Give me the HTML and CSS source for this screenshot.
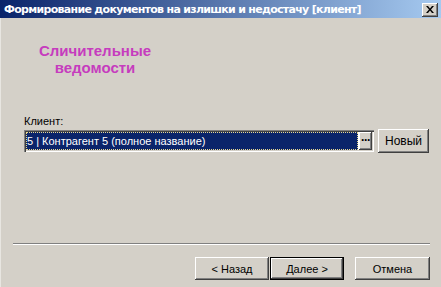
FILE: index.html
```html
<!DOCTYPE html>
<html lang="ru">
<head>
  <meta charset="UTF-8">
  <title>Формирование документов на излишки и недостачу [клиент]</title>
  <link rel="stylesheet" href="styles.css">
</head>
<body>
  <div class="window">
    <div class="titlebar">
      <span class="title">Формирование документов на излишки и недостачу [клиент]</span>
      <span class="close">
        <svg width="8" height="7" viewBox="0 0 8 7"><path d="M0 0h2l2 2.5 2-2.5h2l-3 3.5 3 3.5h-2l-2-2.5-2 2.5h-2l3-3.5z" fill="#000"/></svg>
      </span>
    </div>

    <div class="content">
      <div class="heading">Сличительные<br>ведомости</div>

      <div class="field">
        <div class="label">Клиент:</div>
        <div class="row">
          <div class="combo">
            <div class="selected"><span>5 | Контрагент 5 (полное название)</span></div>
            <div class="dots">···</div>
          </div>
          <button class="btn btn-new">Новый</button>
        </div>
      </div>

      <div class="separator"></div>

      <div class="buttons">
        <button class="btn">&lt; Назад</button>
        <button class="btn default">Далее &gt;</button>
        <button class="btn cancel">Отмена</button>
      </div>
    </div>
  </div>
</body>
</html>
```

FILE: styles.css
```css
body {
  margin: 0;
  background: #d4d0c8;
  font-family: "Liberation Sans", Arial, sans-serif;
  font-size: 11px;
  color: #000;
}
.window {
  width: 441px;
  height: 287px;
  display: flex;
  flex-direction: column;
  box-shadow: inset 1px 0 #e8e6e1;
}
.titlebar {
  height: 18px;
  display: flex;
  align-items: center;
  justify-content: space-between;
  padding: 0 3px 0 4px;
  background: linear-gradient(to right, #0a246a, #a6caf0);
}
.title {
  color: #fff;
  font-family: "DejaVu Sans", sans-serif;
  font-weight: bold;
  font-size: 11px;
  letter-spacing: -0.7px;
  white-space: nowrap;
}
.close {
  width: 16px;
  height: 14px;
  margin-top: 1px;
  display: flex;
  align-items: center;
  justify-content: center;
  background: #d4d0c8;
  box-shadow: inset -1px -1px #404040, inset 1px 1px #fff, inset -2px -2px #808080;
}
.content {
  flex: 1;
  display: flex;
  flex-direction: column;
}
.heading {
  margin-top: 24px;
  width: 190px;
  text-align: center;
  color: #c63cbe;
  font-weight: bold;
  font-size: 15px;
  line-height: 17px;
}
.field {
  margin-top: 39px;
  padding-left: 24px;
}
.label {
  line-height: 13px;
  margin-bottom: 1px;
}
.row {
  display: flex;
  align-items: center;
}
.combo {
  width: 350px;
  height: 22px;
  box-sizing: border-box;
  padding: 2px;
  display: flex;
  background: #fff;
  box-shadow: inset 1px 1px #808080, inset 2px 2px #404040, inset -1px -1px #fff, inset -2px -2px #d4d0c8;
}
.selected {
  flex: 1;
  background: #0a246a;
  color: #fff;
  outline: 1px dotted #e8d890;
  outline-offset: -1px;
  display: flex;
  align-items: center;
  padding-left: 1px;
  white-space: nowrap;
}
.dots {
  width: 13px;
  margin-left: 1px;
  background: #d4d0c8;
  box-shadow: inset -1px -1px #404040, inset 1px 1px #fff, inset -2px -2px #808080;
  font-weight: bold;
  font-size: 12px;
  line-height: 16px;
  text-align: center;
  letter-spacing: -1px;
}
.btn {
  font-family: "Liberation Sans", Arial, sans-serif;
  font-size: 11px;
  color: #000;
  background: #d4d0c8;
  border: none;
  padding: 0;
  height: 23px;
  width: 74px;
  box-shadow: inset -1px -1px #404040, inset 1px 1px #fff, inset -2px -2px #808080;
}
.btn-new {
  width: 51px;
  height: 24px;
  margin-left: 4px;
  font-size: 12px;
}
.separator {
  margin: auto 11px 0 13px;
  border-top: 1px solid #808080;
  border-bottom: 1px solid #fff;
}
.buttons {
  display: flex;
  justify-content: flex-end;
  padding: 12px 11px 7px 0;
}
.btn.default {
  margin-left: 1px;
  box-shadow: inset 0 0 0 1px #000, inset -2px -2px #404040, inset 2px 2px #fff, inset -3px -3px #808080;
}
.btn.cancel {
  width: 75px;
  margin-left: 11px;
}
```
